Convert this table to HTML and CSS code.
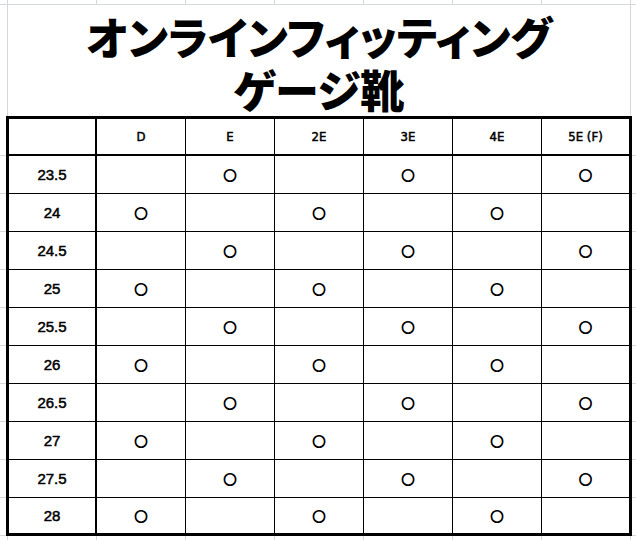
FILE: index.html
```html
<!DOCTYPE html>
<html lang="ja">
<head>
<meta charset="utf-8">
<title>オンラインフィッティング ゲージ靴</title>
<link rel="stylesheet" href="styles.css">
</head>
<body>
<div class="sheet">
  <div class="gridrow top"><span></span><span></span><span></span><span></span><span></span><span></span><span></span><span></span><span></span></div>
  <div class="title">
    <div class="line">オンラインフィッティング</div>
    <div class="line">ゲージ靴</div>
  </div>
  <table class="gauge">
    <colgroup><col class="c-size"><col><col><col><col><col><col class="c-last"></colgroup>
    <thead>
      <tr><th></th><th>D</th><th>E</th><th>2E</th><th>3E</th><th>4E</th><th>5E (F)</th></tr>
    </thead>
    <tbody>
      <tr><td class="size">23.5</td><td></td><td class="mk">○</td><td></td><td class="mk">○</td><td></td><td class="mk">○</td></tr>
      <tr><td class="size">24</td><td class="mk">○</td><td></td><td class="mk">○</td><td></td><td class="mk">○</td><td></td></tr>
      <tr><td class="size">24.5</td><td></td><td class="mk">○</td><td></td><td class="mk">○</td><td></td><td class="mk">○</td></tr>
      <tr><td class="size">25</td><td class="mk">○</td><td></td><td class="mk">○</td><td></td><td class="mk">○</td><td></td></tr>
      <tr><td class="size">25.5</td><td></td><td class="mk">○</td><td></td><td class="mk">○</td><td></td><td class="mk">○</td></tr>
      <tr><td class="size">26</td><td class="mk">○</td><td></td><td class="mk">○</td><td></td><td class="mk">○</td><td></td></tr>
      <tr><td class="size">26.5</td><td></td><td class="mk">○</td><td></td><td class="mk">○</td><td></td><td class="mk">○</td></tr>
      <tr><td class="size">27</td><td class="mk">○</td><td></td><td class="mk">○</td><td></td><td class="mk">○</td><td></td></tr>
      <tr><td class="size">27.5</td><td></td><td class="mk">○</td><td></td><td class="mk">○</td><td></td><td class="mk">○</td></tr>
      <tr class="last"><td class="size">28</td><td class="mk">○</td><td></td><td class="mk">○</td><td></td><td class="mk">○</td><td></td></tr>
    </tbody>
  </table>
  <div class="gridrow bottom"><span></span><span></span><span></span><span></span><span></span><span></span><span></span><span></span><span></span></div>
</div>
</body>
</html>
```

FILE: styles.css
```css
* { box-sizing: border-box; }
html, body { margin: 0; padding: 0; background: #fff; }
.sheet {
  width: 636px;
  height: 540px;
  overflow: hidden;
  background:
    repeating-linear-gradient(to bottom, #d4d7de 0 1px, transparent 1px 38px) 0 155px / 100% 400px no-repeat,
    #fff;
}
.gridrow {
  display: grid;
  grid-template-columns: 8px repeat(7, 89px) 1fr;
}
.gridrow span { border-right: 1px solid #d4d7de; }
.gridrow span:last-child { border-right: 0; }
.gridrow.top { height: 5px; border-bottom: 1px solid #d4d7de; }
.gridrow.bottom { height: 6px; }

.title {
  margin-left: 7px;
  width: 624px;
  height: 111px;
  padding-top: 4px;
  border-left: 1px solid #d4d7de;
  border-right: 1px solid #d4d7de;
  background: #fff;
  display: flex;
  flex-direction: column;
  justify-content: center;
  align-items: center;
  font-family: "Noto Sans CJK JP", sans-serif;
  font-weight: 900;
  font-size: 44px;
  color: #000;
  font-feature-settings: "palt";
}
.title .line { line-height: 53px; height: 53px; }

.gauge {
  margin-left: 6px;
  width: 626px;
  table-layout: fixed;
  border-collapse: separate;
  border-spacing: 0;
  border: 3px solid #000;
  background: #fff;
}
.gauge col { width: 89px; }
.gauge col.c-size { width: 88px; }
.gauge col.c-last { width: 87px; }
.gauge th, .gauge td {
  padding: 0;
  text-align: center;
  vertical-align: middle;
  border-right: 1px solid #000;
  border-bottom: 1px solid #000;
  color: #000;
}
.gauge th:last-child, .gauge td:last-child { border-right: 0; }
.gauge thead tr { height: 37px; }
.gauge thead th {
  border-bottom-width: 2px;
  font-family: "DejaVu Sans Condensed", "DejaVu Sans", sans-serif;
  font-weight: normal;
  font-size: 13px;
  -webkit-text-stroke: 0.5px #000;
}
.gauge tbody tr { height: 38px; }
.gauge tbody tr.last { height: 35px; }
.gauge tbody tr.last td { border-bottom: 0; }
.gauge th:first-child, .gauge td.size { border-right-width: 2px; }
.gauge td.size {
  font-family: "Liberation Sans", sans-serif;
  font-weight: normal;
  font-size: 15px;
  -webkit-text-stroke: 0.5px #000;
}
.gauge td.mk {
  font-family: "Noto Sans CJK JP", sans-serif;
  font-weight: bold;
  font-size: 13px;
  -webkit-text-stroke: 1px #000;
}
```
